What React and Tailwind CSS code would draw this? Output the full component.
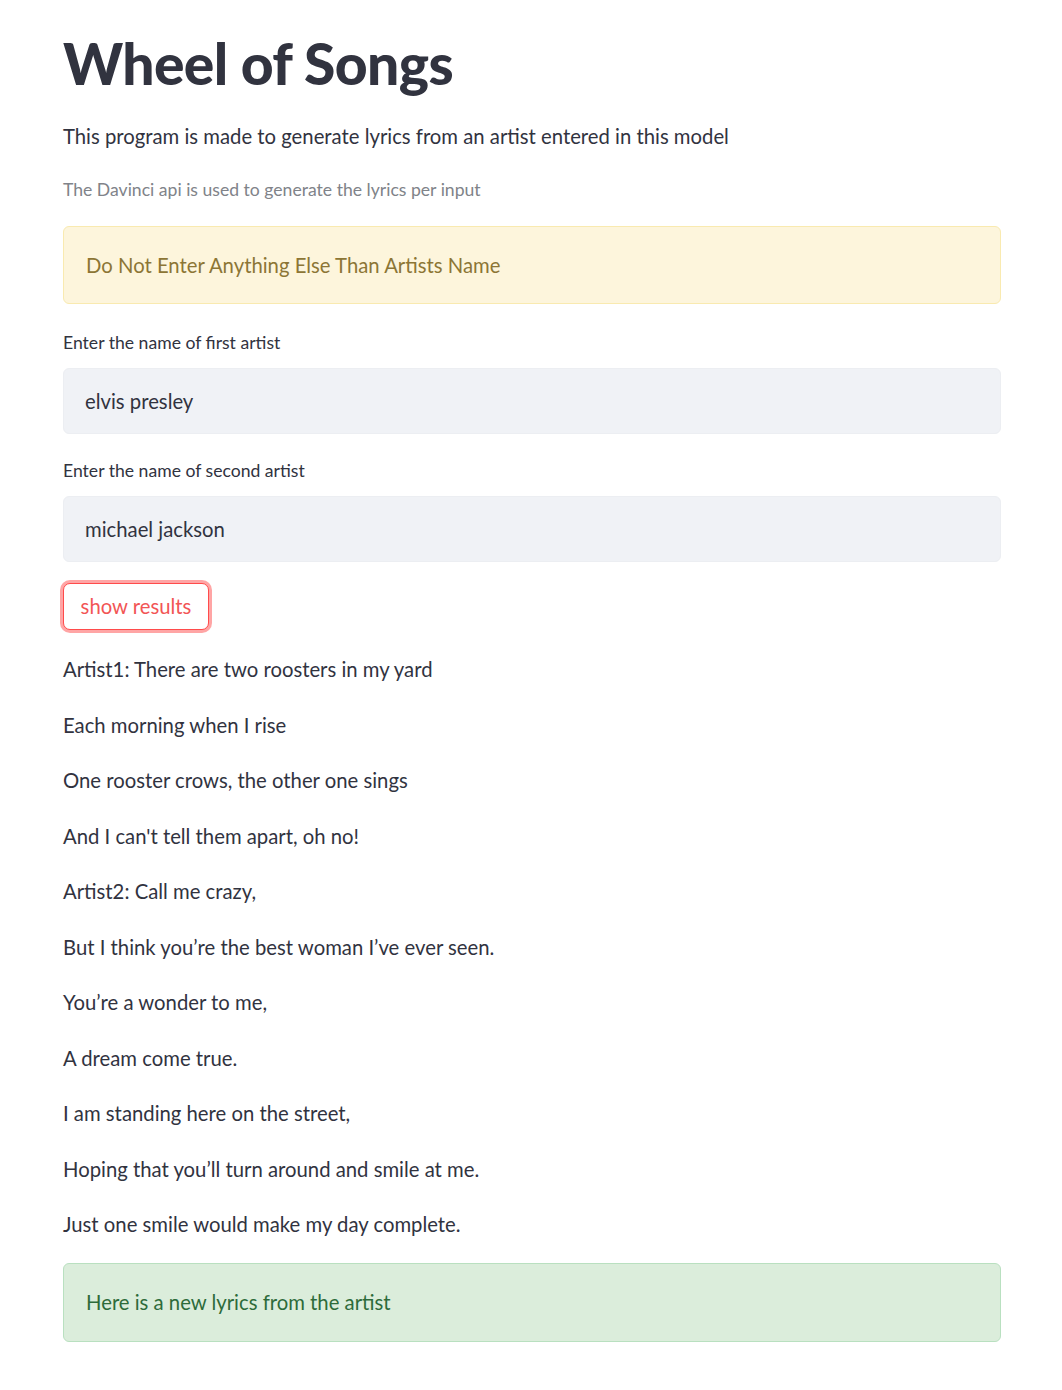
import React from "react";

const lyrics = [
  "Artist1: There are two roosters in my yard",
  "Each morning when I rise",
  "One rooster crows, the other one sings",
  "And I can't tell them apart, oh no!",
  "Artist2: Call me crazy,",
  "But I think you’re the best woman I’ve ever seen.",
  "You’re a wonder to me,",
  "A dream come true.",
  "I am standing here on the street,",
  "Hoping that you’ll turn around and smile at me.",
  "Just one smile would make my day complete.",
];

export default function App() {
  return (
    <div className="min-h-[1390px] bg-white text-[#31333f]" style={{ fontFamily: "Lato, 'Noto Sans', sans-serif" }}>
      <div className="ml-[63px] w-[938px] pt-[28px] pb-[48px] flex flex-col">
        <h1 className="text-[57px] leading-[70px] font-black tracking-[-0.6px] text-[#31333f]">Wheel of Songs</h1>
        <p className="mt-[21px] text-[20.3px] leading-[34px]">This program is made to generate lyrics from an artist entered in this model</p>
        <p className="mt-[22px] text-[17.6px] leading-[30px] text-[#808389]">The Davinci api is used to generate the lyrics per input</p>
        <div className="mt-[21px] h-[78px] rounded-[6px] border border-[#f9eab0] bg-[#fdf5dc] px-[22px] flex items-center text-[20.3px] text-[#8c7535]">
          Do Not Enter Anything Else Than Artists Name
        </div>
        <label className="mt-[24px] text-[17.6px] leading-[30px]">Enter the name of first artist</label>
        <div className="mt-[10px] h-[66px] rounded-[6px] border border-[#eceef2] bg-[#f0f2f6] px-[21px] flex items-center text-[20.3px]">elvis presley</div>
        <label className="mt-[22px] text-[17.6px] leading-[30px]">Enter the name of second artist</label>
        <div className="mt-[10px] h-[66px] rounded-[6px] border border-[#eceef2] bg-[#f0f2f6] px-[21px] flex items-center text-[20.3px]">michael jackson</div>
        <div className="mt-[21px]">
          <button className="h-[47px] w-[146px] rounded-[7px] border border-[#ff4b4b] bg-white text-[20.3px] text-[#f25555] ring-[3px] ring-[#ff4b4b]/50 flex items-center justify-center">show results</button>
        </div>
        <div className="mt-[22px] flex flex-col gap-[21.5px]">
          {lyrics.map((l) => (
            <p key={l} className="text-[20.3px] leading-[34px]">{l}</p>
          ))}
        </div>
        <div className="mt-[22px] h-[79px] rounded-[6px] border border-[#b9e0c0] bg-[#dbeddb] px-[22px] flex items-center text-[20.3px] text-[#2d6b3a]">
          Here is a new lyrics from the artist
        </div>
      </div>
    </div>
  );
}
